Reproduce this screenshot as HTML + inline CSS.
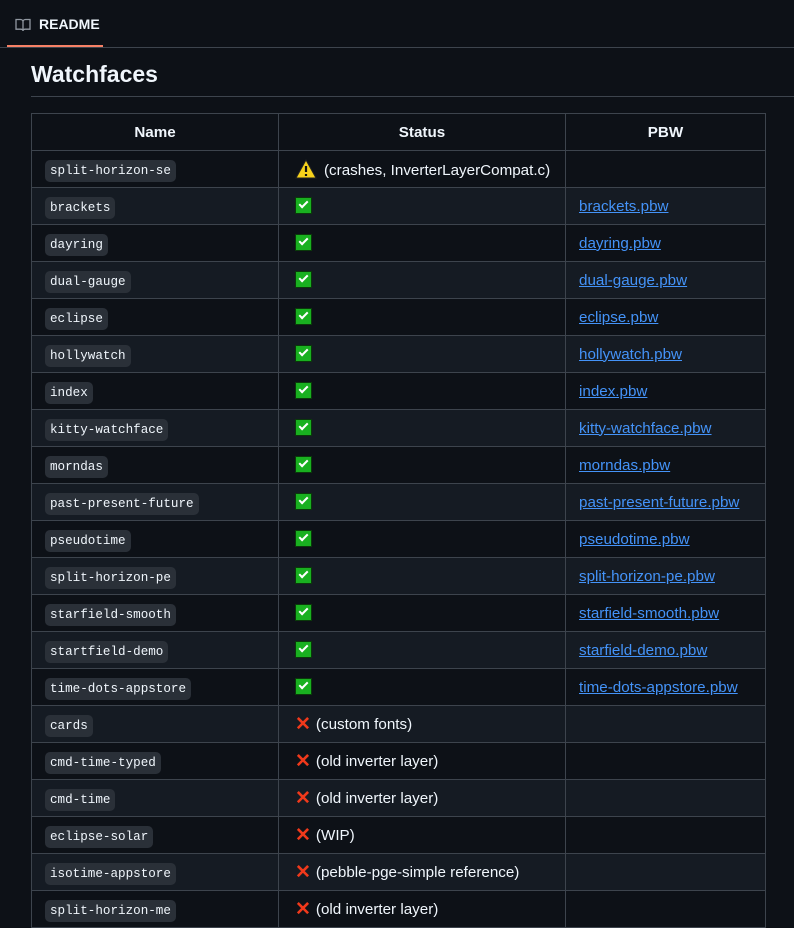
<!DOCTYPE html><html><head><meta charset="utf-8"><style>
body{margin:0;background:#0d1117;color:#f0f6fc;font-family:"Liberation Sans",sans-serif;width:794px;height:924px;overflow:hidden;position:relative}
.tab{position:absolute;left:7px;top:0;width:96px;height:47px;border-bottom:2px solid #f78166;box-sizing:border-box}
.tab span{position:absolute;left:32px;top:16px;font-size:14px;font-weight:bold}
.tab svg{position:absolute;left:8px;top:17px}
.line{position:absolute;left:0;right:0;top:47px;height:1px;background:#3d444d}
h2{position:absolute;left:31px;top:61px;margin:0;font-size:23px;font-weight:bold}
.hr{position:absolute;left:31px;right:0;top:96px;height:1px;background:#3d444d}
table{position:absolute;left:31px;top:113px;border-collapse:collapse;width:734px;font-size:15.2px;table-layout:fixed}
td,th{border:1px solid #3d444d;height:37px;padding:0 13px;box-sizing:border-box;white-space:nowrap;overflow:hidden}
th{font-weight:bold;text-align:center}
tr:nth-child(odd) td{background:#151b23}
code{font-family:"Liberation Mono",monospace;font-size:12.6px;background:#2a3038;border-radius:5px;padding:4px 5px}
a{color:#4493f8;text-decoration:underline}
.ok{display:inline-block;width:17px;height:17px;background:#19b020;border:1px solid #0a3a0a;box-sizing:border-box;vertical-align:-3px;position:relative;margin-left:3px}
.ok:after{content:"";position:absolute;left:3px;top:3px;width:7px;height:3px;border-left:2px solid #fff;border-bottom:2px solid #fff;transform:rotate(-45deg)}
.x{color:#f0391b;font-weight:bold;font-size:19px;margin:0 5px 0 3px;vertical-align:-1px}
</style></head><body>
<div class="tab"><svg width="16" height="16" viewBox="0 0 16 16" fill="none" stroke="#9198a1" stroke-width="1.3"><path d="M1 2.5h4.5c1.4 0 2.5 1 2.5 2.3V14c0-1-1-1.8-2.2-1.8H1z M15 2.5h-4.5C9.1 2.5 8 3.5 8 4.8V14c0-1 1-1.8 2.2-1.8H15z"/></svg><span>README</span></div>
<div class="line"></div>
<h2>Watchfaces</h2><div class="hr"></div>
<table>
<colgroup><col style="width:247px"><col style="width:287px"><col style="width:200px"></colgroup>
<tr><th>Name</th><th>Status</th><th>PBW</th></tr>
<tr><td><code>split-horizon-se</code></td><td><svg width="22" height="20" viewBox="0 0 22 20" style="vertical-align:-4px;margin:0 7px 0 3px"><path d="M11 1L21 19H1z" fill="#f7d21b" stroke="#222" stroke-width="1"/><path d="M11 7v6M11 15v2" stroke="#111" stroke-width="2.2"/></svg>(crashes, InverterLayerCompat.c)</td><td></td></tr>
<tr><td><code>brackets</code></td><td><span class="ok"></span></td><td><a>brackets.pbw</a></td></tr>
<tr><td><code>dayring</code></td><td><span class="ok"></span></td><td><a>dayring.pbw</a></td></tr>
<tr><td><code>dual-gauge</code></td><td><span class="ok"></span></td><td><a>dual-gauge.pbw</a></td></tr>
<tr><td><code>eclipse</code></td><td><span class="ok"></span></td><td><a>eclipse.pbw</a></td></tr>
<tr><td><code>hollywatch</code></td><td><span class="ok"></span></td><td><a>hollywatch.pbw</a></td></tr>
<tr><td><code>index</code></td><td><span class="ok"></span></td><td><a>index.pbw</a></td></tr>
<tr><td><code>kitty-watchface</code></td><td><span class="ok"></span></td><td><a>kitty-watchface.pbw</a></td></tr>
<tr><td><code>morndas</code></td><td><span class="ok"></span></td><td><a>morndas.pbw</a></td></tr>
<tr><td><code>past-present-future</code></td><td><span class="ok"></span></td><td><a>past-present-future.pbw</a></td></tr>
<tr><td><code>pseudotime</code></td><td><span class="ok"></span></td><td><a>pseudotime.pbw</a></td></tr>
<tr><td><code>split-horizon-pe</code></td><td><span class="ok"></span></td><td><a>split-horizon-pe.pbw</a></td></tr>
<tr><td><code>starfield-smooth</code></td><td><span class="ok"></span></td><td><a>starfield-smooth.pbw</a></td></tr>
<tr><td><code>startfield-demo</code></td><td><span class="ok"></span></td><td><a>starfield-demo.pbw</a></td></tr>
<tr><td><code>time-dots-appstore</code></td><td><span class="ok"></span></td><td><a>time-dots-appstore.pbw</a></td></tr>
<tr><td><code>cards</code></td><td><span class="x">✕</span>(custom fonts)</td><td></td></tr>
<tr><td><code>cmd-time-typed</code></td><td><span class="x">✕</span>(old inverter layer)</td><td></td></tr>
<tr><td><code>cmd-time</code></td><td><span class="x">✕</span>(old inverter layer)</td><td></td></tr>
<tr><td><code>eclipse-solar</code></td><td><span class="x">✕</span>(WIP)</td><td></td></tr>
<tr><td><code>isotime-appstore</code></td><td><span class="x">✕</span>(pebble-pge-simple reference)</td><td></td></tr>
<tr><td><code>split-horizon-me</code></td><td><span class="x">✕</span>(old inverter layer)</td><td></td></tr>
</table>
</body></html>
